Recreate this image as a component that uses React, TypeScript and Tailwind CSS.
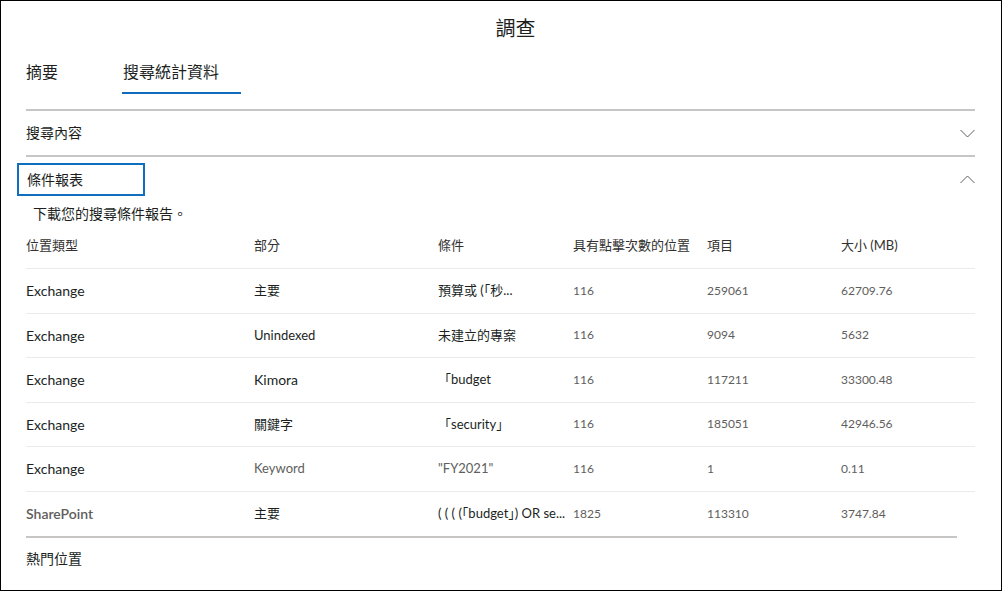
import React from "react";

type Row = {
  type: string;
  part: string;
  cond: string;
  hits: string;
  items: string;
  size: string;
  partClass?: string;
  typeClass?: string;
  condClass?: string;
};

const rows: Row[] = [
  { type: "Exchange", part: "主要", cond: "預算或 (「秒...", hits: "116", items: "259061", size: "62709.76" },
  { type: "Exchange", part: "Unindexed", cond: "未建立的專案", hits: "116", items: "9094", size: "5632", partClass: "text-[12px]" },
  { type: "Exchange", part: "Kimora", cond: "「budget", hits: "116", items: "117211", size: "33300.48", partClass: "text-[14px]" },
  { type: "Exchange", part: "關鍵字", cond: "「security」", hits: "116", items: "185051", size: "42946.56" },
  { type: "Exchange", part: "Keyword", cond: "\"FY2021\"", hits: "116", items: "1", size: "0.11", partClass: "text-[#605e5c]", condClass: "text-[#605e5c]" },
  { type: "SharePoint", part: "主要", cond: "( ( ( (「budget」) OR se...", hits: "1825", items: "113310", size: "3747.84", typeClass: "text-[#605e5c] font-semibold" },
];

const headers = ["位置類型", "部分", "條件", "具有點擊次數的位置", "項目", "大小 (MB)"];

const cols = "grid grid-cols-[228px_184px_135px_134px_134px_1fr]";

function Chevron({ up }: { up?: boolean }) {
  return (
    <svg width="15" height="9" viewBox="0 0 15 9" fill="none" stroke="#605e5c" strokeWidth="1">
      {up ? <polyline points="0.5,8 7.5,1 14.5,8" /> : <polyline points="0.5,1 7.5,8 14.5,1" />}
    </svg>
  );
}

export default function App() {
  return (
    <div className="w-[1002px] h-[591px] border border-black bg-white text-[#201f1e] font-[family-name:Lato,'Noto_Sans_CJK_TC',sans-serif] overflow-hidden">
      {/* title */}
      <div className="pt-[13px] h-[55px] pl-[29px] text-center text-[20px] leading-[28px]">調查</div>

      <div className="pl-[25px] pr-[26px]">
        {/* tabs */}
        <div className="flex h-[38px]">
          <div className="w-[96px] pt-[5px] text-[16px] leading-[22px]">摘要</div>
          <div className="w-[119px] pt-[5px] pl-[1px] text-[16px] leading-[22px] border-b-2 border-[#0f6cbd]">搜尋統計資料</div>
        </div>

        <div className="mt-[15px] h-[2px] bg-[#c8c6c4]" />

        {/* search content */}
        <div className="flex h-[44px] items-center justify-between">
          <span className="text-[14px] leading-[20px]">搜尋內容</span>
          <Chevron />
        </div>

        <div className="h-[2px] bg-[#c8c6c4]" />

        {/* condition report */}
        <div className="mt-[6px] flex h-[33px] items-center justify-between">
          <div className="-ml-[9px] w-[128px] h-[33px] border-2 border-[#106ebe] pl-[8px] flex items-center text-[14px] leading-[20px]">
            條件報表
          </div>
          <span className="mt-[-1px]">
            <Chevron up />
          </span>
        </div>

        <div className="mt-[8px] pl-[7px] text-[14px] leading-[20px]">下載您的搜尋條件報告。</div>

        {/* table */}
        <div className={`${cols} h-[45px] items-center border-b border-[#edebe9] text-[13px] text-[#323130]`}>
          {headers.map((h) => (
            <div key={h} className="truncate">{h}</div>
          ))}
        </div>
        {rows.map((r, i) => (
          <div
            key={i}
            className={`${cols} h-[44.5px] items-center ${i < rows.length - 1 ? "border-b border-[#edebe9]" : ""}`}
          >
            <div className={`text-[14px] ${r.typeClass ?? ""}`}>{r.type}</div>
            <div className={`text-[13px] ${r.partClass ?? ""}`}>{r.part}</div>
            <div className={`text-[13px] whitespace-nowrap ${r.condClass ?? ""}`}>{r.cond}</div>
            <div className="text-[12px] text-[#605e5c]">{r.hits}</div>
            <div className="text-[12px] text-[#605e5c]">{r.items}</div>
            <div className="text-[12px] text-[#605e5c]">{r.size}</div>
          </div>
        ))}
        <div className="w-[931px] h-[2px] bg-[#c8c6c4]" />

        <div className="mt-[11px] text-[14px] leading-[20px]">熱門位置</div>
      </div>
    </div>
  );
}
